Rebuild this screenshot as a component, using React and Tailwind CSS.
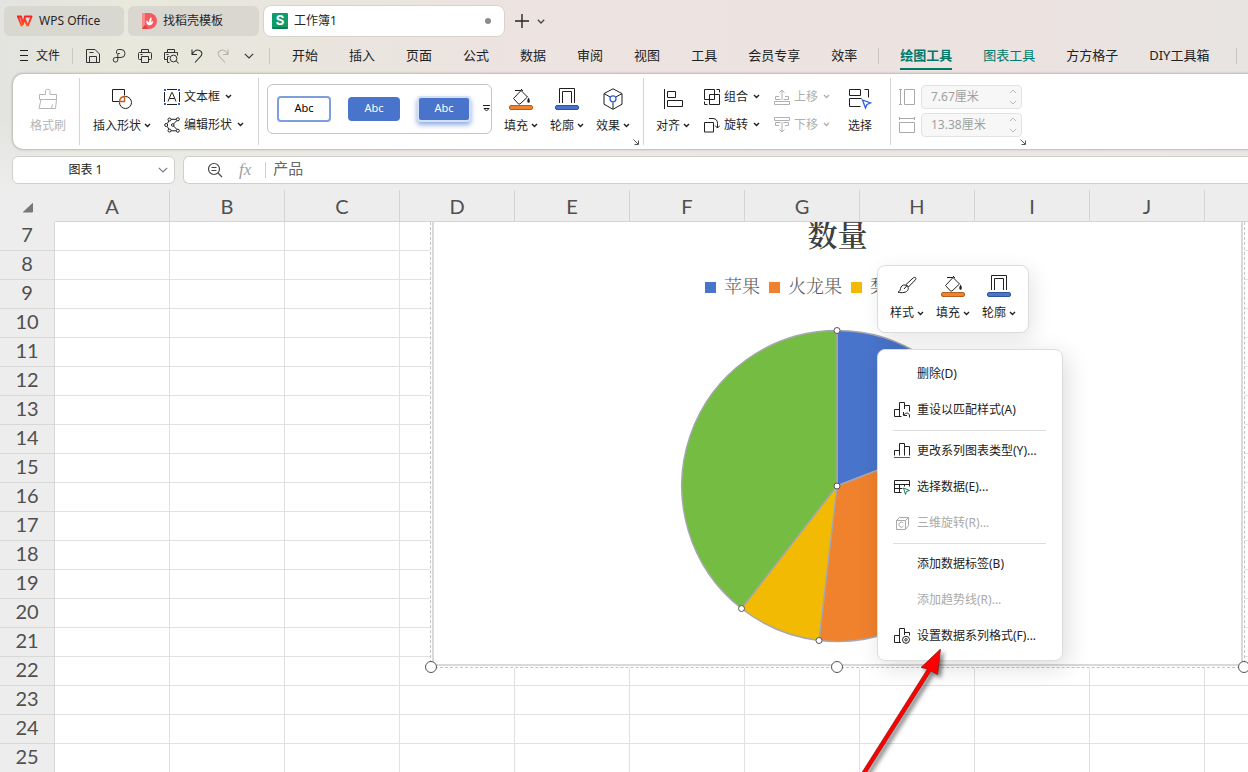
import clsx from "clsx";

const MENU_TABS = ["开始", "插入", "页面", "公式", "数据", "审阅", "视图", "工具", "会员专享", "效率"];
const COLUMNS = ["A", "B", "C", "D", "E", "F", "G", "H", "I", "J"];
const ROWS = Array.from({ length: 19 }, (_, i) => i + 7);

const Svg = ({ w = 16, h = 16, className, children }) => (
  <svg width={w} height={h} viewBox={`0 0 ${w} ${h}`} fill="none" stroke="currentColor" className={clsx("shrink-0", className)} aria-hidden="true">
    {children}
  </svg>
);

const Caret = () => (
  <Svg w={7} h={5}>
    <path d="M1 1l2.5 2.5L6 1" strokeWidth="1.4" />
  </Svg>
);

const Chevron = () => (
  <Svg w={10} h={6}>
    <path d="M0.8 0.8L5 5l4.2-4.2" strokeWidth="1.1" />
  </Svg>
);

const WpsLogo = () => (
  <Svg w={17} h={12}>
    <defs>
      <linearGradient id="wps" x1="0" y1="0" x2="0" y2="1">
        <stop offset="0" stopColor="#f5222d" />
        <stop offset="1" stopColor="#ff5a1f" />
      </linearGradient>
    </defs>
    <path d="M1 1.5h4L7 9l2-7.5h6.5L12 10.5h-.6L8.6 4M2 1.5L5.500 10.500h1" stroke="url(#wps)" strokeWidth="2" strokeLinejoin="round" />
  </Svg>
);

const DocerLogo = () => (
  <Svg w={15} h={16}>
    <path d="M0 0h7a8 8 0 0 1 0 16H0z" fill="#f55a5d" stroke="none" />
    <path d="M0 0h3v12L0 16z" fill="#f98b8a" stroke="none" />
    <path d="M0 16l3-4 3 4z" fill="#d94448" stroke="none" />
    <path d="M7.2 12.500C4.600 11.800 4 9.800 4.500 7.500c1.600.7 2.400 1.700 2.600 3C6.800 7.800 7.500 5.500 9.200 4c.8 1.800.4 3.500-.7 5.500.7-.9 1.500-1.400 2.700-1.600 0 2.500-1.400 4.200-4 4.600z" fill="#fff" stroke="none" />
  </Svg>
);

const SheetLogo = () => (
  <span className="flex h-4 w-4 shrink-0 items-center justify-center rounded-[1px] border-b-2 border-[#0a7b50] bg-[#109c69] font-['Inter',sans-serif] text-[13px] leading-none font-bold text-white">S</span>
);

const SaveIcon = () => (
  <Svg>
    <path d="M1.5 1.5h8.5l4.5 4.5v8.5h-13zM4.5 14.5v-6h7v6M4.500 4.5h4" />
  </Svg>
);

const ExportIcon = () => (
  <Svg>
    <path d="M5.5 5.5v-2a2 2 0 0 1 2-2h2.500a4 4 0 0 1 0 8H4.500a2.300 2.300 0 1 0 2.300 2.300V5.500h2" />
  </Svg>
);

const PrintIcon = () => (
  <Svg>
    <path d="M4.5 4.5v-3h7v3M4.5 11.5h-2a1 1 0 0 1-1-1v-5a1 1 0 0 1 1-1h11a1 1 0 0 1 1 1v5a1 1 0 0 1-1 1h-2M4.5 8.5h7v6h-7zM3.5 6.5h2" />
  </Svg>
);

const PreviewIcon = () => (
  <Svg>
    <path d="M4.5 4.5v-3h7v3M4.5 11.5h-3v-7h13v3M6.5 14.5h-2v-6h2M3.5 6.5h2M13 12.5l2.500 3" />
    <circle cx="10.5" cy="10.5" r="3.4" />
  </Svg>
);

const UndoIcon = ({ className }) => (
  <Svg className={className}>
    <path d="M3 1.5v5h5M3.2 6.3C5 3 8 1.300 10.600 2.400c2.800 1.200 2.900 4 1 6L6 14.5" strokeWidth="1.1" />
  </Svg>
);

const BrushIcon = () => (
  <Svg w={22} h={22}>
    <path d="M2.5 11.5v-5h6V3a2.300 2.300 0 0 1 4.500 0v3.500h6.500v5zM4 11.500l-2 9h16.500l1-9M14.500 20.500l1-4" />
  </Svg>
);

const ShapesIcon = () => (
  <Svg w={22} h={22}>
    <path d="M8.5 13.5h-7v-12h12v6" />
    <circle cx="14.5" cy="14.5" r="6" />
    <path d="M8.5 13.5a5.500 5.500 0 0 1 5-5v5z" stroke="#c55a1d" fill="#fff" strokeWidth="1.3" />
  </Svg>
);

const TextBoxIcon = () => (
  <Svg>
    <path d="M3 .5h10M3 15.5h10M.5 3v10M15.5 3v10M4 12.500L7.700 3.500h.6L12 12.500M5.500 9.500h5" />
    <path d="M0 0h2v2H0zM14 0h2v2h-2zM0 14h2v2H0zM14 14h2v2h-2z" fill="#2b5fe0" stroke="none" />
  </Svg>
);

const EditShapeIcon = () => (
  <Svg>
    <path d="M7 2.300h5M3.300 6.500L5 3.800M3.300 9.500l1.600 2.800M7 13.800h5M13 3.500L9.500 7M9.500 9l3.500 3.500" />
    <circle cx="5.500" cy="2.500" r="1.500" />
    <circle cx="13.800" cy="2.300" r="1.500" />
    <circle cx="2.200" cy="8" r="1.500" />
    <circle cx="8.800" cy="8" r="1.300" />
    <circle cx="5.500" cy="13.600" r="1.500" />
    <circle cx="13.800" cy="13.700" r="1.500" />
  </Svg>
);

const FillIcon = () => (
  <Svg w={24} h={22}>
    <path d="M6 2.5h6l6.500 6.500-7.500 7H9.500l-5-5.500L12.500 2M12 1l2 2" />
    <path d="M19.500 9.500c1.500 2 1.900 5 .2 5.300-2 0-1.700-3-.2-5.300z" fill="currentColor" stroke="none" />
    <rect x="0.5" y="17.5" width="23" height="4" rx="1.5" fill="#f0822e" stroke="#b2601f" />
  </Svg>
);

const OutlineIcon = () => (
  <Svg w={24} h={22}>
    <path d="M4.5 15V.5h15V15M7.5 15V3.500h9V15" />
    <rect x="0.5" y="17.5" width="23" height="4" rx="1.5" fill="#4874cb" stroke="#30549b" />
  </Svg>
);

const EffectIcon = () => (
  <Svg w={22} h={22}>
    <path d="M11 .8l9 4.800v10.600L11 21.300 2 16.200V5.600zM2 5.600l6 3.300M20 5.600l-6 3.300M11 14.500v6.500" />
    <circle cx="11" cy="10.8" r="3" stroke="#2b5fe0" strokeWidth="1.3" />
  </Svg>
);

const AlignIcon = () => (
  <Svg w={20} h={20}>
    <path d="M1.5 0v20M4.5 2.5h8v6h-8zM4.500 11.500h15v6h-15z" />
  </Svg>
);

const GroupIcon = () => (
  <Svg>
    <path d="M.5 10.5V.5h10v10zM5.500 15.500v-10h10v10zM.5 12.500v3h3M12.500.5h3v3" />
  </Svg>
);

const RotateIcon = () => (
  <Svg>
    <path d="M.5 5.500h9v9.500h-9zM5 1.500h4a5 5 0 0 1 4.500 5v4.500M11 8.500l2.500 2.500L16 8.500" />
  </Svg>
);

const MoveIcon = ({ className }) => (
  <Svg className={className}>
    <path d="M.5 12.500h15v3H.5zM5 7.500H1.500v3h5M11 7.500h3.500v3h-5M8 11V1M5.500 3.500L8 1l2.500 2.500" />
  </Svg>
);

const SelectIcon = () => (
  <Svg w={24} h={22}>
    <path d="M12.500 18.500h-11v-8h10M1.500 7.500v-6h11v6zM16.500 1.500h4v8M10.500 10.500h3" />
    <path d="M14.500 12l8 3-3.500 1.500-1.500 3.500z" stroke="#2b5fe0" fill="#fff" strokeWidth="1.3" />
  </Svg>
);

const HeightIcon = () => (
  <Svg>
    <path d="M5.500.5h10v15h-10zM0 .5h3M0 15.500h3M1.500.5v15" />
  </Svg>
);

const WidthIcon = () => (
  <Svg>
    <path d="M.5 5.500h15v10H.5zM.5 0v3M15.500 0v3M.5 1.500h15" />
  </Svg>
);

const PaintIcon = () => (
  <Svg w={22} h={22}>
    <path d="M10 9.500l7.500-6.800c1.600-1.200 3.200.4 2 2L12.500 12M10 9.500l2.500 2.500M9 10c-2.500-.3-4 1.200-4.500 3.700-.4 1.800-1 3-2.500 3.500 4 1 8.500.5 10-2.400.7-1.500.3-3.500-3-4.800zM8 14l3-3.500" />
  </Svg>
);

const BarsReset = () => (
  <Svg>
    <path d="M7.500 14.500h-7v-7h5M5.500 14.500V.500h5v6.500M10.500 3.500h5v6M9.500 10v3.500h3.500M10 13c1-2.500 4.500-2.500 5.500 0v2.500" />
  </Svg>
);

const BarsType = () => (
  <Svg>
    <path d="M.5 12.500v-5h5M5.500 12.500v-12h5v12M10.500 3.500h5v9" />
    <path d="M0 14.500h16" stroke="#108060" />
  </Svg>
);

const BarsGear = () => (
  <Svg>
    <path d="M7 14.500H.5v-7h5M5.500 14.500V.500h5v6.500M10.500 4.500h5v3" />
    <circle cx="12" cy="11.800" r="3.500" />
    <circle cx="12" cy="11.800" r="1.200" />
  </Svg>
);

const SelectData = () => (
  <Svg>
    <path d="M7.500 13.500h-7v-12h15v6M.5 5.500h15M.5 9.500h8M5.500 5.500v8M10.500 5.500v2" />
    <path d="M9.500 9l6 2.500-3 1-1 3z" stroke="#108060" />
  </Svg>
);

const CubeIcon = () => (
  <Svg>
    <path d="M2.500 5.500h9v9h-9zM2.500 5.500l3-3h9v8l-3 4M11.500 5.500l3-3M9.200 8A2.500 2.500 0 1 0 9.500 11" />
  </Svg>
);

const Launcher = () => (
  <button aria-label="更多设置" className="self-end text-[#555]">
    <Svg w={6} h={6}>
      <path d="M.5.5l4.500 4.500M5.500 1.500v4h-4" />
    </Svg>
  </button>
);

const Label = ({ children, caret }) => (
  <span className="flex items-center gap-[3px] whitespace-nowrap">
    {children}
    {caret && <Caret />}
  </span>
);

const BigButton = ({ icon, label, caret = true, className }) => (
  <button className={clsx("flex shrink-0 flex-col items-center gap-2", className)}>
    <span className="flex h-[22px] items-center">{icon}</span>
    <Label caret={caret}>{label}</Label>
  </button>
);

const SmallButton = ({ icon, label, disabled }) => (
  <button disabled={disabled} className={clsx("flex h-5 shrink-0 items-center gap-1", disabled && "text-[#b0b0b0]")}>
    {icon}
    <span className="flex items-center gap-[5px] whitespace-nowrap">
      {label}
      <Caret />
    </span>
  </button>
);

const RibbonGroup = ({ className, children }) => (
  <div className={clsx("flex shrink-0 border-r border-[#d4d4d4]", className)}>{children}</div>
);

const SizeField = ({ id, icon, label, value }) => (
  <div className="flex items-center gap-1.5">
    <label htmlFor={id} aria-label={label} className="text-[#a9a9a9]">
      {icon}
    </label>
    <div className="flex h-6 w-[101px] items-center rounded border border-[#e2e2e2] bg-[#f7f7f7] pr-1 text-[#a0a0a0]">
      <input id={id} disabled defaultValue={value} className="w-full min-w-0 pl-[9px]" />
      <span className="flex flex-col gap-1.5 text-[#bbb]">
        <Svg w={8} h={5}>
          <path d="M.8 4.200L4 1l3.200 3.200" />
        </Svg>
        <Svg w={8} h={5}>
          <path d="M.8.8L4 4 7.200.8" />
        </Svg>
      </span>
    </div>
  </div>
);

const TitleTabs = () => (
  <header className="flex h-10 shrink-0 items-center gap-1 pt-0.5 pl-1 text-xs text-[#262626]">
    <button className="flex h-[30px] w-[120px] items-center gap-1.5 rounded-md bg-[#d9d8d0] pl-3">
      <WpsLogo />
      WPS Office
    </button>
    <button className="flex h-[30px] w-[131px] items-center gap-1.5 rounded-md bg-[#d9d7d0] pl-3.5">
      <DocerLogo />
      找稻壳模板
    </button>
    <button className="flex h-8 w-[242px] items-center gap-1.5 rounded-lg border border-[#d8d2cc] bg-white pl-2">
      <SheetLogo />
      工作簿1
      <span className="mr-[13px] ml-auto h-1.5 w-1.5 rounded-full bg-[#8c8c8c]" />
    </button>
    <button aria-label="新建" className="ml-0.5 p-1">
      <Svg w={14} h={14}>
        <path d="M7 0v14M0 7h14" strokeWidth="1.4" />
      </Svg>
    </button>
    <button aria-label="标签列表" className="text-[#444]">
      <Svg w={8} h={5}>
        <path d="M.8.8L4 4 7.200.8" strokeWidth="1.3" />
      </Svg>
    </button>
  </header>
);

const MenuBar = () => (
  <nav className="flex h-8 shrink-0 items-center text-[13px] whitespace-nowrap text-[#222]">
    <button className="flex items-center gap-2 pl-5 text-xs">
      <Svg w={8} h={12}>
        <path d="M0 .5h8M0 5.500h8M0 10.500h8" />
      </Svg>
      文件
    </button>
    <span className="ml-3 h-4 w-px bg-[#cbc8c2]" />
    <div className="ml-3 flex shrink-0 items-center gap-2.5 text-[#333]">
      <button aria-label="保存"><SaveIcon /></button>
      <button aria-label="输出为PDF"><ExportIcon /></button>
      <button aria-label="打印"><PrintIcon /></button>
      <button aria-label="打印预览"><PreviewIcon /></button>
      <button aria-label="撤销"><UndoIcon /></button>
      <button aria-label="恢复"><UndoIcon className="-scale-x-100 text-[#b5b5b0]" /></button>
      <button aria-label="更多" className="ml-[3px]"><Chevron /></button>
    </div>
    <span className="ml-[15px] h-4 w-px bg-[#cbc8c2]" />
    <div className="ml-[22px] flex shrink-0 gap-[31px]">
      {MENU_TABS.map((tab) => (
        <button key={tab}>{tab}</button>
      ))}
    </div>
    <span className="ml-[21px] h-4 w-px bg-[#c9c3c1]" />
    <div className="ml-[21px] flex shrink-0 items-center gap-[31px]">
      <button className="relative h-6 font-bold text-[#00796b]">
        绘图工具
        <span className="absolute inset-x-0 -bottom-0.5 h-0.5 bg-[#00796b]" />
      </button>
      <button className="text-[#00796b]">图表工具</button>
      <button>方方格子</button>
      <button>DIY工具箱</button>
    </div>
    <span className="ml-[27px] h-4 w-px bg-[#c9c3c1]" />
  </nav>
);

const Ribbon = () => (
  <section className="mt-0.5 ml-[13px] flex h-[75px] shrink-0 overflow-hidden rounded-l-[10px] bg-white py-1 text-xs text-[#1f1f1f] shadow-[0_0_2px_1px_rgba(150,140,130,0.5)]">
    <RibbonGroup className="w-[67px] items-center justify-center pb-0.5 pl-1">
      <BigButton icon={<BrushIcon />} label="格式刷" caret={false} className="text-[#b5b5b5]" />
    </RibbonGroup>
    <RibbonGroup className="w-[179px] items-center gap-[13px] pb-0.5 pl-[13px]">
      <BigButton icon={<ShapesIcon />} label="插入形状" />
      <div className="flex flex-col gap-2">
        <SmallButton icon={<TextBoxIcon />} label="文本框" />
        <SmallButton icon={<EditShapeIcon />} label="编辑形状" />
      </div>
    </RibbonGroup>
    <RibbonGroup className="w-[385px] pl-2">
      <div className="flex shrink-0 items-center gap-3 pb-0.5">
        <div className="-mt-1 flex h-[50px] w-[225px] shrink-0 items-center rounded-md border border-[#c4c4c4] pl-[9px] text-[11px]">
          <button className="h-[26px] w-[54px] rounded border-2 border-[#7f9fdc] text-black">Abc</button>
          <button className="ml-[17px] h-6 w-[52px] rounded bg-[#4874cb] text-white">Abc</button>
          <button className="ml-[17px] h-[26px] w-[54px] rounded border-2 border-[#d5e0f5] bg-[#4874cb] text-white shadow-[0_3px_5px_rgba(72,116,203,0.6)]">Abc</button>
          <button aria-label="更多样式" className="ml-3">
            <Svg w={7} h={7}>
              <path d="M0 .5h7M1 3.500h5L3.500 6z" />
            </Svg>
          </button>
        </div>
        <BigButton icon={<FillIcon />} label="填充" />
        <BigButton icon={<OutlineIcon />} label="轮廓" />
        <BigButton icon={<EffectIcon />} label="效果" />
      </div>
      <span className="ml-[3px] flex shrink-0"><Launcher /></span>
    </RibbonGroup>
    <RibbonGroup className="w-[247px] items-center gap-3.5 pb-0.5 pl-3">
      <BigButton icon={<AlignIcon />} label="对齐" />
      <div className="flex flex-col gap-2">
        <SmallButton icon={<GroupIcon />} label="组合" />
        <SmallButton icon={<RotateIcon />} label="旋转" />
      </div>
      <div className="flex flex-col gap-2">
        <SmallButton disabled icon={<MoveIcon />} label="上移" />
        <SmallButton disabled icon={<MoveIcon className="-scale-y-100" />} label="下移" />
      </div>
      <BigButton icon={<SelectIcon />} label="选择" caret={false} className="ml-1" />
    </RibbonGroup>
    <div className="flex shrink-0 pl-2">
      <div className="flex flex-col justify-center gap-1 pb-0.5">
        <SizeField id="shape-height" icon={<HeightIcon />} label="高度" value="7.67厘米" />
        <SizeField id="shape-width" icon={<WidthIcon />} label="宽度" value="13.38厘米" />
      </div>
      <span className="-ml-0.5 flex"><Launcher /></span>
    </div>
  </section>
);

const FormulaBar = () => (
  <div className="mt-[7px] flex h-[34px] shrink-0 gap-2 pb-1.5 pl-3 text-[#222]">
    <div className="flex w-[163px] shrink-0 items-center rounded-md border border-[#d0cfca] bg-white pr-1.5">
      <input aria-label="名称框" defaultValue="图表 1" className="w-full min-w-0 text-center text-xs" />
      <button aria-label="名称列表" className="text-[#777]">
        <Chevron />
      </button>
    </div>
    <div className="flex min-w-0 flex-1 items-center rounded-l-md border border-r-0 border-[#d0cfca] bg-white pl-[23px]">
      <button aria-label="缩小" className="text-[#444]">
        <Svg>
          <circle cx="7" cy="7" r="5.5" strokeWidth="1.2" />
          <path d="M4.500 5.500h5M4.500 8.500h5M11 11l4 4" strokeWidth="1.1" />
        </Svg>
      </button>
      <button className="ml-4 font-['Liberation_Serif',serif] text-[17px] text-[#a0a0a0] italic">fx</button>
      <span className="ml-3.5 h-4 w-px bg-[#d0d0d0]" />
      <input aria-label="编辑栏" defaultValue="产品" className="ml-[7px] min-w-0 flex-1 pb-1 text-[15px] text-[#666]" />
    </div>
  </div>
);

const Grid = () => (
  <table className="w-full table-fixed border-separate border-spacing-0 font-['Lato','Noto_Sans_CJK_SC',sans-serif] text-xl text-[#505050]">
    <colgroup>
      <col className="w-[55px]" />
      {COLUMNS.map((c) => (
        <col key={c} className="w-[115px]" />
      ))}
      <col />
    </colgroup>
    <thead>
      <tr className="h-8 bg-[#ededed]">
        <th className="p-0 pt-1">
          <Svg w={10} h={10} className="ml-[23px]">
            <path d="M9.500.5v8.500h-9z" fill="#777" stroke="#777" />
          </Svg>
        </th>
        {COLUMNS.map((c) => (
          <th key={c} className="border-r border-b border-[#d4d4d4] p-0 pt-0.5 leading-[29px] font-normal">
            {c}
          </th>
        ))}
        <td className="border-b border-[#d4d4d4] p-0" />
      </tr>
    </thead>
    <tbody>
      {ROWS.map((r) => (
        <tr key={r} className="h-[29px]">
          <th className="border-r border-b border-[#d8d8d8] bg-[#ededed] p-0 pb-1 leading-6 font-normal">{r}</th>
          {COLUMNS.map((c) => (
            <td key={c} className="border-r border-b border-[#e1e1e1] bg-white p-0" />
          ))}
          <td className="border-b border-[#e1e1e1] bg-white p-0" />
        </tr>
      ))}
    </tbody>
  </table>
);

const LEGEND = [
  { name: "苹果", color: "bg-[#4874cb]" },
  { name: "火龙果", color: "bg-[#f0822e]" },
  { name: "梨", color: "bg-[#f2ba02]" },
];

// slice edges on a circle of radius 155.5 centred at 160,160
const PieChart = () => (
  <svg width="320" height="320" viewBox="0 0 320 320" className="mt-[27px] ml-[243px] block" role="img" aria-label="数量">
    <g stroke="#a6a6ae" strokeWidth="1.4">
      <path d="M160 160V4.500A155.500 155.500 0 0 1 305 103.500z" fill="#4874cb" />
      <path d="M160 160L305 103.500A155.500 155.500 0 0 1 142 314.500z" fill="#f0822e" />
      <path d="M160 160L142 314.500A155.500 155.500 0 0 1 64.500 282.500z" fill="#f2ba02" />
      <path d="M160 160L64.500 282.500A155.500 155.500 0 0 1 160 4.500z" fill="#75bd42" />
    </g>
    <g fill="#fff" stroke="#555">
      <circle cx="160" cy="4.5" r="3" />
      <circle cx="160" cy="160" r="3" />
      <circle cx="142" cy="314.5" r="3" />
      <circle cx="64.5" cy="282.5" r="3" />
    </g>
  </svg>
);

const Handle = ({ className }) => (
  <span className={clsx("absolute h-3 w-3 rounded-full border border-[#555] bg-white", className)} />
);

const ChartFrame = () => (
  <div className="absolute top-0 left-[430px] h-[446px] w-[815px] border-x border-b border-dashed border-[#c4c4c4] bg-white">
    <div className="mx-px flow-root h-[444px] border-x-2 border-b-2 border-[#d9d9d9] font-['Liberation_Serif','Noto_Serif_CJK_SC','Noto_Sans_CJK_SC',serif]">
      <h2 className="-mt-1 text-center text-[30px] leading-9 font-semibold text-[#404040]">数量</h2>
      <ul className="mt-[21px] ml-[271px] flex h-6 items-center gap-[9px] text-lg font-light whitespace-nowrap text-[#595959]">
        {LEGEND.map((item) => (
          <li key={item.name} className="flex items-center gap-2">
            <span className={clsx("h-[11px] w-[11px]", item.color)} />
            {item.name}
          </li>
        ))}
      </ul>
      <PieChart />
    </div>
    <Handle className="-bottom-1.5 -left-1.5" />
    <Handle className="-bottom-1.5 left-[400px]" />
    <Handle className="-right-1.5 -bottom-1.5" />
  </div>
);

const MiniToolbar = () => (
  <div className="absolute top-[43px] left-[877px] flex h-[68px] w-[152px] items-center justify-center gap-3 rounded-lg border border-[#dcdcdc] bg-white pb-0.5 text-xs text-[#222] shadow-[4px_6px_20px_rgba(0,0,0,0.1)]">
    <BigButton icon={<PaintIcon />} label="样式" />
    <BigButton icon={<FillIcon />} label="填充" />
    <BigButton icon={<OutlineIcon />} label="轮廓" />
  </div>
);

const MenuItem = ({ icon, disabled, children }) => (
  <button role="menuitem" disabled={disabled} className={clsx("flex h-9 w-full items-center gap-[7px] pl-4 whitespace-nowrap", disabled && "text-[#aaa]")}>
    <span className="w-4">{icon}</span>
    {children}
  </button>
);

const MenuLine = () => <hr className="mr-4 mb-0.5 ml-[15px] mt-0.5 border-[#dedede]" />;

const ContextMenu = () => (
  <div role="menu" className="absolute top-[127px] left-[877px] w-[186px] rounded-lg border border-[#dcdcdc] bg-white py-1.5 text-xs text-[#222] shadow-[4px_6px_24px_rgba(0,0,0,0.14)]">
    <MenuItem>删除(D)</MenuItem>
    <MenuItem icon={<BarsReset />}>重设以匹配样式(A)</MenuItem>
    <MenuLine />
    <MenuItem icon={<BarsType />}>更改系列图表类型(Y)...</MenuItem>
    <MenuItem icon={<SelectData />}>选择数据(E)...</MenuItem>
    <MenuItem disabled icon={<CubeIcon />}>三维旋转(R)...</MenuItem>
    <MenuLine />
    <MenuItem>添加数据标签(B)</MenuItem>
    <MenuItem disabled>添加趋势线(R)...</MenuItem>
    <MenuItem icon={<BarsGear />}>设置数据系列格式(F)...</MenuItem>
  </div>
);

const Arrow = () => (
  <svg width="100" height="140" viewBox="0 0 100 140" className="absolute top-[427px] left-[856px] drop-shadow-[3px_3px_2px_rgba(0,0,0,0.5)]" aria-hidden="true">
    <path d="M84.500 0L65 18.500l6.500 1.500L5 125h4.500L75 22l6.500 3.500z" fill="#fe0000" stroke="#8a1010" strokeWidth="0.7" />
  </svg>
);

const App = () => {
  return (
    <div className="flex h-screen flex-col overflow-hidden bg-[#ededed] bg-[linear-gradient(to_bottom,transparent_120px,#ededed_190px),linear-gradient(to_right,#e3e3e0,#e8e8dc_10%,#e8e6dd_22%,#ede3e1_42%,#ece2e0_80%,#e7e4e2)] font-['Noto_Sans','Noto_Sans_CJK_SC',sans-serif]">
      <TitleTabs />
      <MenuBar />
      <Ribbon />
      <FormulaBar />
      <main className="relative min-h-0 flex-1 overflow-hidden">
        <Grid />
        <div className="absolute inset-x-0 top-8 bottom-0 overflow-hidden">
          <ChartFrame />
          <MiniToolbar />
          <ContextMenu />
          <Arrow />
        </div>
      </main>
    </div>
  );
};

export default App;
